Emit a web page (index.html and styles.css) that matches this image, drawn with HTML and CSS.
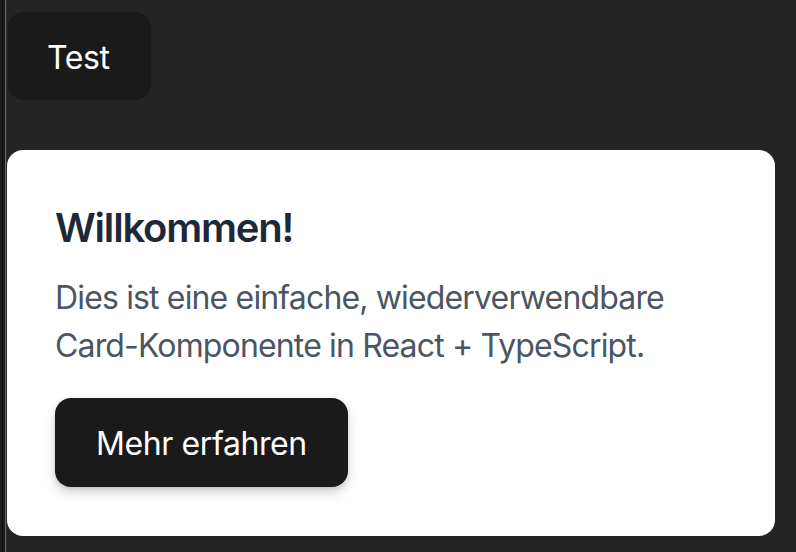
FILE: index.html
```html
<!DOCTYPE html>
<html lang="de">
<head>
<meta charset="utf-8">
<title>Card</title>
<link rel="stylesheet" href="styles.css">
</head>
<body>
  <div class="app">
    <button class="btn btn-test">Test</button>
    <div class="card">
      <h2 class="card-title">Willkommen!</h2>
      <p class="card-text">Dies ist eine einfache, wiederverwendbare Card-Komponente in React + TypeScript.</p>
      <button class="btn btn-primary">Mehr erfahren</button>
    </div>
  </div>
</body>
</html>
```

FILE: styles.css
```css
html, body {
  margin: 0;
  height: 100%;
}

body {
  font-family: "Inter", "Liberation Sans", sans-serif;
  background:
    linear-gradient(to right,
      #1d1d1d 0, #1d1d1d 2px,
      #0c0c0c 2px, #0c0c0c 3px,
      #1d1d1d 3px, #1d1d1d 5px,
      #666666 5px, #666666 6px,
      #2e2e2e 6px, #2e2e2e 7px,
      #242424 7px);
  overflow: hidden;
}

.app {
  padding: 12px 0 0 7px;
  display: flex;
  flex-direction: column;
  align-items: flex-start;
}

.btn {
  font-family: inherit;
  font-size: 32px;
  line-height: 48px;
  font-weight: 400;
  letter-spacing: -0.4px;
  color: #ffffff;
  background: #1a1a1a;
  border: 2px solid transparent;
  border-radius: 16px;
  cursor: pointer;
}

.btn-test {
  margin-left: 1px;
  height: 88px;
  padding: 3px 39px 0 37px;
}

.card {
  margin-top: 50px;
  width: 768px;
  box-sizing: border-box;
  background: #ffffff;
  border-radius: 16px;
  padding: 48px 48px 49px;
}

.card-title {
  margin: 0 0 16px;
  font-size: 40px;
  line-height: 60px;
  font-weight: 600;
  color: #1e2937;
  letter-spacing: -1.2px;
}

.card-text {
  margin: 0 0 28px;
  font-size: 32px;
  line-height: 48px;
  color: #4b5563;
  letter-spacing: -0.85px;
}

.btn-primary {
  height: 89px;
  padding: 2px 39px 0;
  box-shadow: 0 6px 12px rgba(0, 0, 0, 0.16), 0 2px 4px rgba(0, 0, 0, 0.1);
}
```
